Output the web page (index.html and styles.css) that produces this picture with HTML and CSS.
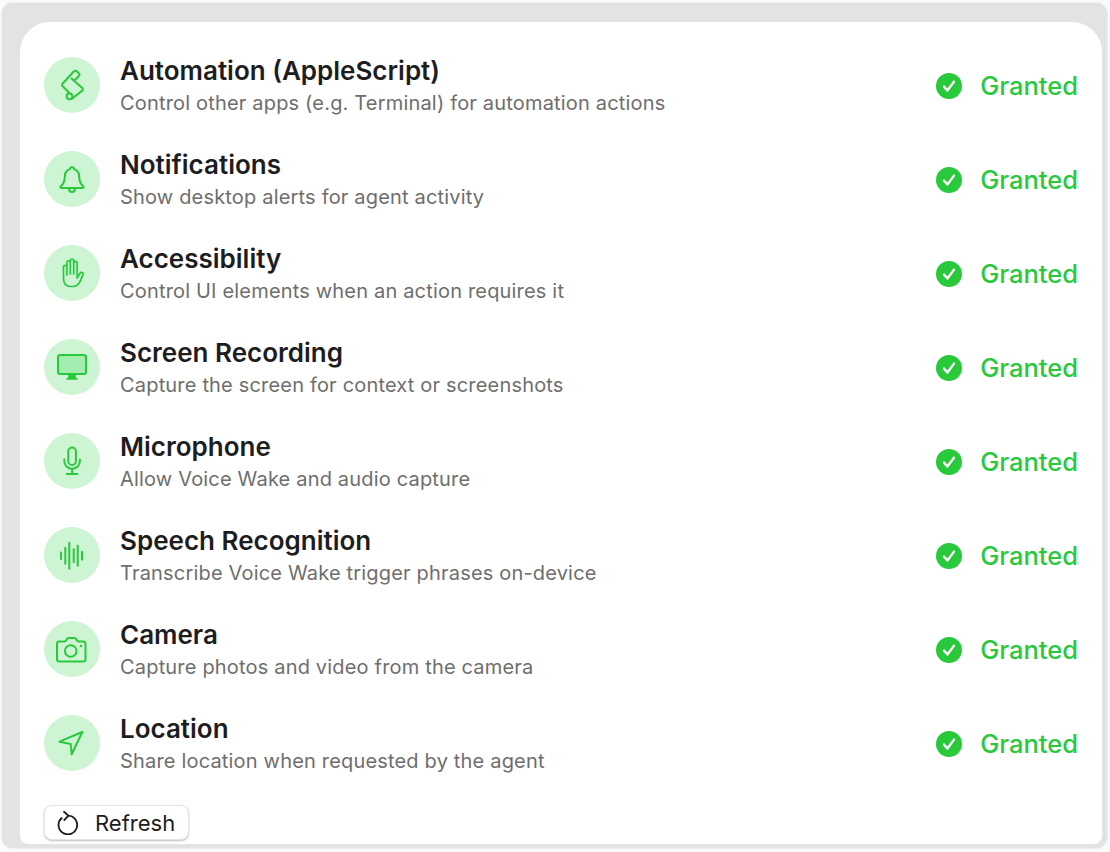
FILE: index.html
```html
<!DOCTYPE html>
<html lang="en">
<head>
<meta charset="utf-8">
<title>Permissions</title>
<link rel="stylesheet" href="styles.css">
</head>
<body>
<svg class="defs" width="0" height="0" aria-hidden="true">
  <symbol id="check" viewBox="0 0 26 26"><circle cx="13" cy="13" r="13" fill="#29c93c"/><path d="M8 13.600l3.400 3.900L18 8.600" fill="none" stroke="#fff" stroke-width="2.400" stroke-linecap="round" stroke-linejoin="round"/></symbol>
</svg>
<main class="window">
  <section class="card">
    <ul class="list">
      <li class="row">
        <span class="badge"><svg class="icon" viewBox="0 0 32 32"><path d="M7 17.500a2 2 0 0 1-.3-3L17.500 2.700a2.700 2.700 0 0 1 3.800 0l1.500 1.500a2 2 0 0 1 0 2.800l-4.300 4.500M15.500 9.500L26.300 19a1.800 1.800 0 0 1 0 2.600L15.500 30M7 17.500l6.500 6.700"/><circle cx="13.500" cy="27.300" r="2.900"/></svg></span>
        <div class="text"><h2 class="title">Automation (AppleScript)</h2><p class="desc">Control other apps (e.g. Terminal) for automation actions</p></div>
        <div class="status"><svg class="check"><use href="#check"/></svg><span class="granted">Granted</span></div>
      </li>
      <li class="row">
        <span class="badge"><svg class="icon" viewBox="0 0 32 32"><path d="M16 4.200a2.200 2.200 0 0 1 2.200 2c3.500 1 5 4 5 7.500 0 4.500 1 7 4 9.500.7.700.3 1.800-.7 1.800H5.500c-1 0-1.400-1.100-.7-1.800 3-2.500 4-5 4-9.500 0-3.500 1.500-6.500 5-7.500a2.200 2.200 0 0 1 2.200-2zM12.800 25c0 2.500 1.400 4 3.200 4s3.200-1.500 3.200-4"/></svg></span>
        <div class="text"><h2 class="title">Notifications</h2><p class="desc">Show desktop alerts for agent activity</p></div>
        <div class="status"><svg class="check"><use href="#check"/></svg><span class="granted">Granted</span></div>
      </li>
      <li class="row">
        <span class="badge"><svg class="icon thin" viewBox="0 0 32 32"><path d="M7.500 10a1.700 1.700 0 0 1 3.400 0v8M10.900 18V5.500a1.700 1.700 0 0 1 3.400 0V17M14.300 17V3.700a1.700 1.700 0 0 1 3.400 0V17M17.700 17V6a1.700 1.700 0 0 1 3.400 0v15M21.100 21l2.700-4.500c1.200-2 4-.7 3.200 1.300l-2.900 6.500c-1.500 3.500-4 5.200-7.800 5.200h-1.500c-5 0-7.300-3-7.300-8V10"/></svg></span>
        <div class="text"><h2 class="title">Accessibility</h2><p class="desc">Control UI elements when an action requires it</p></div>
        <div class="status"><svg class="check"><use href="#check"/></svg><span class="granted">Granted</span></div>
      </li>
      <li class="row">
        <span class="badge"><svg class="icon" viewBox="0 0 32 32"><rect x="2" y="4" width="28" height="19" rx="2" fill="#a3edb0"/><path class="solid" d="M12.500 23.500h7l.6 3.500H11.900zM10.500 27h11v1.800h-11z"/></svg></span>
        <div class="text"><h2 class="title">Screen Recording</h2><p class="desc">Capture the screen for context or screenshots</p></div>
        <div class="status"><svg class="check"><use href="#check"/></svg><span class="granted">Granted</span></div>
      </li>
      <li class="row">
        <span class="badge"><svg class="icon" viewBox="0 0 32 32"><rect x="12.300" y="2.500" width="7.600" height="17.500" rx="3.800"/><path d="M8.300 14.500v1.500a7.800 7.800 0 0 0 15.600 0v-1.500M16.100 23.800V29M10.800 29h10.600"/></svg></span>
        <div class="text"><h2 class="title">Microphone</h2><p class="desc">Allow Voice Wake and audio capture</p></div>
        <div class="status"><svg class="check"><use href="#check"/></svg><span class="granted">Granted</span></div>
      </li>
      <li class="row">
        <span class="badge"><svg class="icon" viewBox="0 0 32 32"><path d="M5 13.500v6.400M9.300 8.700v16M13.300 3.700v26M17.700 10.200v13M21.700 6.700v20M26 12.700v8"/></svg></span>
        <div class="text"><h2 class="title">Speech Recognition</h2><p class="desc">Transcribe Voice Wake trigger phrases on-device</p></div>
        <div class="status"><svg class="check"><use href="#check"/></svg><span class="granted">Granted</span></div>
      </li>
      <li class="row">
        <span class="badge"><svg class="icon" viewBox="0 0 32 32"><path d="M3.300 8.500h4.900c1 0 1.500-.4 2-1.200l.9-1.500c.4-.6 1-.9 1.700-.9h5.400c.7 0 1.300.3 1.700.9l.9 1.500c.5.8 1 1.200 2 1.200h4.400c1.500 0 2.300.8 2.300 2.300v15.400c0 1.500-.8 2.300-2.300 2.300H3.300c-1.500 0-2.300-.8-2.300-2.300V10.800c0-1.500.8-2.300 2.300-2.300z"/><circle cx="14.700" cy="18" r="5.800"/><circle class="solid" cx="25" cy="13" r="1.300"/></svg></span>
        <div class="text"><h2 class="title">Camera</h2><p class="desc">Capture photos and video from the camera</p></div>
        <div class="status"><svg class="check"><use href="#check"/></svg><span class="granted">Granted</span></div>
      </li>
      <li class="row">
        <span class="badge"><svg class="icon" viewBox="0 0 32 32"><path d="M26.300 5L3.500 14.700 14.700 17l1 10.300z"/></svg></span>
        <div class="text"><h2 class="title">Location</h2><p class="desc">Share location when requested by the agent</p></div>
        <div class="status"><svg class="check"><use href="#check"/></svg><span class="granted">Granted</span></div>
      </li>
    </ul>
    <button class="refresh" type="button">
      <svg class="refresh-icon" viewBox="0 0 24 24"><path d="M11.500 4.700A9.300 9.300 0 1 1 4.700 7M7 .8l4.500 3.900L7.300 9"/></svg>
      <span>Refresh</span>
    </button>
  </section>
</main>
</body>
</html>
```
FILE: styles.css
```css
* { box-sizing: border-box; }
html, body { margin: 0; height: 100%; background: #fbfbfb; }
body { font-family: Inter, "Liberation Sans", sans-serif; overflow: hidden; }
.defs { position: absolute; }
.window {
  margin: 3px 3px 4px 2px;
  height: 845px;
  padding: 19px 5px 4px 18px;
  background: #e3e3e3;
  border-radius: 11px;
  box-shadow: 0 0 2px rgba(0,0,0,.18);
}
.card {
  height: 100%;
  background: #fff;
  border-radius: 30px 30px 8px 8px;
  padding: 35px 24px 0;
}
.list { list-style: none; margin: 0; padding: 0; display: flex; flex-direction: column; gap: 38px; }
.row { display: flex; align-items: center; height: 56px; }
.badge {
  flex: none; width: 56px; height: 56px; border-radius: 50%;
  background: #cdf4d3; display: flex; align-items: center; justify-content: center;
  margin-right: 20px;
}
.icon { width: 32px; height: 32px; fill: none; stroke: #29c93c; stroke-width: 2; stroke-linecap: round; stroke-linejoin: round; }
.icon.thin { stroke-width: 1.700; }
.icon .solid { fill: #29c93c; stroke: none; }
.text { flex: 1; min-width: 0; padding-top: 3px; }
.title { margin: 0; font-size: 26px; line-height: 32px; font-weight: 600; color: #1d1d1f; }
.desc { margin: 0; font-size: 20px; line-height: 32px; letter-spacing: .18px; color: #6e6e6e; }
.status { display: flex; align-items: center; gap: 18px; padding-top: 2px; }
.check { width: 26px; height: 26px; }
.granted { font-size: 25.500px; font-weight: 500; color: #29c93c; margin-bottom: 2px; }
.refresh {
  display: inline-flex; align-items: center; gap: 14px;
  margin-top: 34px; width: 145px; height: 35px; padding: 0 0 0 12px;
  background: #fff; border: 1px solid #e4e4e4; border-radius: 8px;
  box-shadow: 0 1px 2px rgba(0,0,0,.25);
  font: 400 22px Inter, "Liberation Sans", sans-serif; color: #1d1d1f;
}
.refresh-icon { width: 24px; height: 24px; fill: none; stroke: #1d1d1f; stroke-width: 1.800; stroke-linecap: round; stroke-linejoin: round; }
```
